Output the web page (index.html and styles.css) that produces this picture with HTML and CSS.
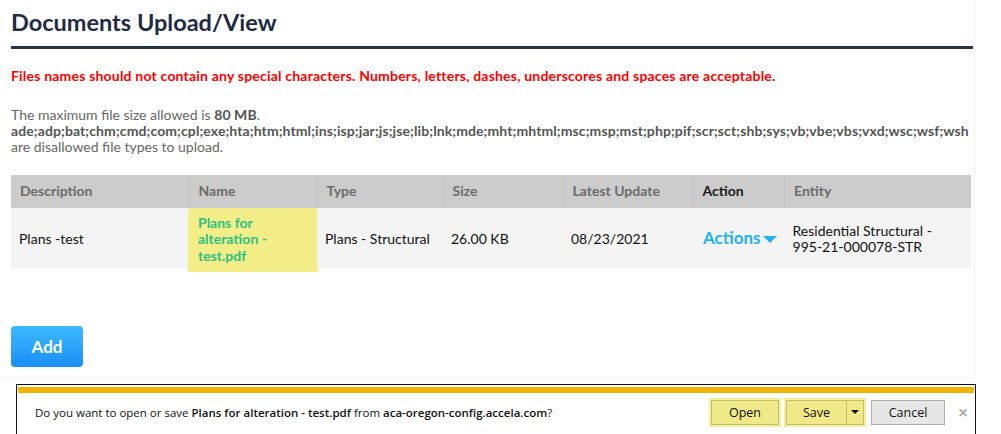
FILE: index.html
```html
<!DOCTYPE html>
<html lang="en">
  <head>
    <meta charset="UTF-8" />
    <title>Documents Upload/View</title>
    <link rel="stylesheet" href="styles.css">
  </head>
  <body>
    <div class="page">
      <h1 class="title">Documents Upload/View</h1>
      <p class="warn">Files names should not contain any special characters. Numbers, letters, dashes, underscores and spaces are acceptable.</p>
      <p class="info">
        The maximum file size allowed is <b>80 MB</b>.<br />
        <b>ade;adp;bat;chm;cmd;com;cpl;exe;hta;htm;html;ins;isp;jar;js;jse;lib;lnk;mde;mht;mhtml;msc;msp;mst;php;pif;scr;sct;shb;sys;vb;vbe;vbs;vxd;wsc;wsf;wsh</b><br />
        are disallowed file types to upload.
      </p>
      <table class="docs">
        <thead>
          <tr>
            <th class="c-desc">Description</th>
            <th class="c-name">Name</th>
            <th class="c-type">Type</th>
            <th class="c-size">Size</th>
            <th class="c-date">Latest Update</th>
            <th class="c-act dark">Action</th>
            <th class="c-ent">Entity</th>
          </tr>
        </thead>
        <tbody>
          <tr>
            <td>Plans -test</td>
            <td class="file"><a href="javascript:;">Plans for alteration - test.pdf</a></td>
            <td>Plans - Structural</td>
            <td>26.00 KB</td>
            <td>08/23/2021</td>
            <td><a href="javascript:;" class="actions">Actions<span class="caret"></span></a></td>
            <td>Residential Structural - 995-21-000078-STR</td>
          </tr>
        </tbody>
      </table>
      <div class="add-row">
        <a href="javascript:;" class="btn-add">Add</a>
      </div>
    </div>

    <!-- download bar -->
    <div class="notify">
      <div class="notify-body">
        <span class="msg">Do you want to open or save <b>Plans for alteration - test.pdf</b> from <b>aca-oregon-config.accela.com</b>?</span>
        <div class="nbtns">
          <span class="nbtn hl w-open">Open</span>
          <span class="split hl">
            <span class="nbtn w-save">Save</span><span class="nbtn drop"><span class="tri"></span></span>
          </span>
          <span class="nbtn w-cancel">Cancel</span>
          <span class="close">&#10005;</span>
        </div>
      </div>
    </div>
  </body>
</html>
```

FILE: styles.css
```css
* {
  margin: 0px;
  padding: 0px;
  text-decoration: none;
  box-sizing: border-box;
}
body {
  font-family: Lato, "Open Sans", sans-serif;
  background: #fff;
  width: 1001px;
  height: 434px;
  overflow: hidden;
}
.page {
  width: 975px;
  height: 378px;
  padding: 0 0 0 11px;
  border-right: 1px solid #f4f4f4;
  border-bottom: 1px solid #f4f4f4;
}
.title {
  font-size: 23.5px;
  font-weight: 700;
  color: #1f2b44;
  line-height: 28px;
  padding-top: 8px;
  width: 962px;
  padding-bottom: 10px;
  border-bottom: 3px solid #253248;
}
.warn {
  margin-top: 19px;
  font-size: 14px;
  letter-spacing: 0.2px;
  font-weight: 700;
  color: #fe0000;
  line-height: 16px;
}
.info {
  margin-top: 23px;
  font-size: 14px;
  color: #666;
  line-height: 16px;
}
.info b {
  color: #555;
  letter-spacing: 0.1px;
}
.docs {
  margin-top: 20px;
  width: 960px;
  border-collapse: collapse;
  font-size: 14px;
}
.docs th {
  height: 33px;
  background: #cccccc;
  color: #6b6b6b;
  font-weight: 700;
  text-align: left;
  padding: 0 8px 2px 9px;
  border-left: 1px solid #c4c4c4;
}
.docs th:first-child {
  border-left: none;
}
.docs th.dark {
  color: #1a1a1a;
}
.c-desc { width: 178px; }
.c-name { width: 128px; }
.c-type { width: 126px; }
.c-size { width: 120px; }
.c-date { width: 130px; }
.c-act { width: 91px; }
.docs td {
  height: 61px;
  background: #f4f4f4;
  color: #111;
  padding: 0 8px;
  line-height: 16px;
  vertical-align: middle;
}
.docs td.file {
  background: #f4ee88;
  box-shadow: 1px 3px 0 #f4ee88, -1px 3px 0 #f4ee88;
  padding: 2px 9px 0;
}
.file a {
  color: #2cbf86;
  font-weight: 700;
  display: block;
  line-height: 16.5px;
}
.actions {
  color: #22b2f3;
  font-size: 17px;
  font-weight: 700;
  display: inline-flex;
  align-items: center;
  margin-left: 2px;
}
.caret {
  display: inline-block;
  margin-left: 2px;
  margin-top: 3px;
  border-left: 7px solid transparent;
  border-right: 7px solid transparent;
  border-top: 7px solid #22b2f3;
}
.add-row {
  margin-top: 57px;
}
.btn-add {
  display: inline-block;
  width: 72px;
  height: 41px;
  line-height: 41px;
  text-align: center;
  border-radius: 4px;
  background: linear-gradient(#3dbaff, #1a8ef6);
  color: #fff;
  font-size: 17px;
  font-weight: 700;
}
.notify {
  margin: 6px 0 0 16px;
  width: 960px;
  height: 60px;
  border: 1px solid #111;
  border-bottom: none;
  padding: 2px 1px 0;
}
.notify-body {
  border-top: 6px solid #f0b400;
  display: flex;
  align-items: center;
  padding: 7px 0 0 17px;
  font-family: "Open Sans", "Noto Sans", sans-serif;
  font-size: 11.5px;
  color: #111;
}
.msg {
  flex: 1;
}
.msg b {
  font-weight: 600;
}
.nbtns {
  display: flex;
  align-items: center;
  gap: 7px;
}
.nbtn {
  display: inline-block;
  height: 25px;
  line-height: 23px;
  text-align: center;
  border: 1px solid #adadad;
  background: #e6e6e6;
  font-size: 12.5px;
}
.hl {
  box-shadow: 0 0 0 2px #f4ef9a;
}
.w-open {
  width: 68px;
  background: #efe98a;
  border-color: #c4bd6a;
}
.split {
  display: inline-flex;
}
.split .nbtn {
  background: #efe98a;
  border-color: #c4bd6a;
}
.w-save {
  width: 61px;
}
.drop {
  width: 17px;
  border-left: none !important;
  position: relative;
}
.tri {
  display: inline-block;
  border-left: 4px solid transparent;
  border-right: 4px solid transparent;
  border-top: 4px solid #111;
  vertical-align: middle;
  margin-bottom: 3px;
}
.w-cancel {
  width: 74px;
}
.close {
  width: 22px;
  text-align: center;
  color: #a8a8a8;
  font-size: 12px;
  font-weight: 700;
}
```
